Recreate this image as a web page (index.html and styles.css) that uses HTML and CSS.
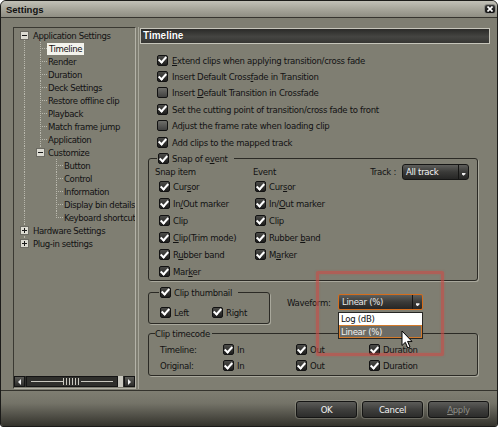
FILE: index.html
```html
<!DOCTYPE html>
<html>
<head>
<meta charset="utf-8">
<title>Settings</title>
<link rel="stylesheet" href="styles.css">
</head>
<body>
<div class="dialog">
  <div class="titlebar">
    <span class="title">Settings</span>
    <span class="close"><svg width="6" height="6" viewBox="0 0 6 6"><path d="M0.5 0.5L5.5 5.5M5.5 0.5L0.5 5.5" stroke="#fff" stroke-width="1.6"/></svg></span>
  </div>
  <div class="main">
    <div class="tree">
      <div class="tree-items">
        <div class="node"><span class="g vb"><span class="box minus"></span></span><span class="lbl top">Application Settings</span></div>
        <div class="node"><span class="g v"></span><span class="g tee"></span><span class="lbl sel">Timeline</span></div>
        <div class="node"><span class="g v"></span><span class="g tee"></span><span class="lbl">Render</span></div>
        <div class="node"><span class="g v"></span><span class="g tee"></span><span class="lbl">Duration</span></div>
        <div class="node"><span class="g v"></span><span class="g tee"></span><span class="lbl">Deck Settings</span></div>
        <div class="node"><span class="g v"></span><span class="g tee"></span><span class="lbl">Restore offline clip</span></div>
        <div class="node"><span class="g v"></span><span class="g tee"></span><span class="lbl">Playback</span></div>
        <div class="node"><span class="g v"></span><span class="g tee"></span><span class="lbl">Match frame jump</span></div>
        <div class="node"><span class="g v"></span><span class="g tee"></span><span class="lbl">Application</span></div>
        <div class="node"><span class="g v"></span><span class="g vt"><span class="box minus"></span></span><span class="lbl">Customize</span></div>
        <div class="node"><span class="g v"></span><span class="g"></span><span class="g tee"></span><span class="lbl">Button</span></div>
        <div class="node"><span class="g v"></span><span class="g"></span><span class="g tee"></span><span class="lbl">Control</span></div>
        <div class="node"><span class="g v"></span><span class="g"></span><span class="g tee"></span><span class="lbl">Information</span></div>
        <div class="node"><span class="g v"></span><span class="g"></span><span class="g tee"></span><span class="lbl">Display bin details</span></div>
        <div class="node"><span class="g v"></span><span class="g"></span><span class="g ell"></span><span class="lbl">Keyboard shortcuts</span></div>
        <div class="node"><span class="g v"><span class="box plus"></span></span><span class="lbl top">Hardware Settings</span></div>
        <div class="node"><span class="g vt"><span class="box plus"></span></span><span class="lbl top">Plug-in settings</span></div>
      </div>
      <div class="hscroll">
        <span class="sb-btn"><span class="tri-l"></span></span>
        <span class="sb-thumb"></span>
        <span class="sb-rest"></span>
        <span class="sb-btn"><span class="tri-r"></span></span>
      </div>
    </div>

    <div class="panel">
      <div class="panel-head">Timeline</div>
      <div class="opts">
        <div class="opt"><span class="cb on"></span><span><u>E</u>xtend clips when applying transition/cross fade</span></div>
        <div class="opt"><span class="cb on"></span><span>Insert Default Cross<u>f</u>ade in Transition</span></div>
        <div class="opt"><span class="cb off"></span><span>Insert <u>D</u>efault Transition in Crossfade</span></div>
        <div class="opt"><span class="cb on"></span><span>Set the cutting point of transition/cross fade to front</span></div>
        <div class="opt"><span class="cb off"></span><span>Adjust the frame rate when loading clip</span></div>
        <div class="opt"><span class="cb on"></span><span>Add clips to the mapped track</span></div>
      </div>

      <fieldset class="group snap">
        <legend class="legend-cb"><span class="cb on"></span><span>Snap of e<u>v</u>ent</span></legend>
        <div class="snap-grid">
          <div class="col col-snap">
            <div class="col-head">Snap item</div>
            <div class="item"><span class="cb on"></span><span>Cur<u>s</u>or</span></div>
            <div class="item"><span class="cb on"></span><span>In<u>/</u>Out marker</span></div>
            <div class="item"><span class="cb on"></span><span>Clip</span></div>
            <div class="item"><span class="cb on"></span><span><u>C</u>lip(Trim mode)</span></div>
            <div class="item"><span class="cb on"></span><span>R<u>u</u>bber band</span></div>
            <div class="item"><span class="cb on"></span><span>Mar<u>k</u>er</span></div>
          </div>
          <div class="col col-event">
            <div class="col-head">Event</div>
            <div class="item"><span class="cb on"></span><span>Cur<u>s</u>or</span></div>
            <div class="item"><span class="cb on"></span><span>In/<u>O</u>ut marker</span></div>
            <div class="item"><span class="cb on"></span><span>Clip</span></div>
            <div class="item"><span class="cb on"></span><span>Rubber <u>b</u>and</span></div>
            <div class="item"><span class="cb on"></span><span>M<u>a</u>rker</span></div>
          </div>
          <div class="track">
            <span>Track :</span>
            <span class="select track-select"><span class="sel-text">All track</span><span class="sel-arrow"></span></span>
          </div>
        </div>
      </fieldset>

      <div class="thumb-row">
        <fieldset class="group thumb">
          <legend class="legend-cb"><span class="cb on"></span><span>Clip thumbnail</span></legend>
          <div class="lr">
            <div class="item item-left"><span class="cb on"></span><span>Left</span></div>
            <div class="item"><span class="cb on"></span><span>Right</span></div>
          </div>
        </fieldset>
        <div class="waveform">
          <span class="wf-label">Waveform:</span>
          <span class="select wave-select"><span class="sel-text">Linear (%)</span><span class="sel-arrow"></span></span>
        </div>
      </div>

      <fieldset class="group timecode">
        <legend class="legend-plain">Clip timecode</legend>
        <div class="tc-row">
          <span>Timeline:</span>
          <span class="item"><span class="cb on"></span><span>In</span></span>
          <span class="item"><span class="cb on"></span><span>Out</span></span>
          <span class="item"><span class="cb on"></span><span>Duration</span></span>
        </div>
        <div class="tc-row">
          <span>Original:</span>
          <span class="item"><span class="cb on"></span><span>In</span></span>
          <span class="item"><span class="cb on"></span><span>Out</span></span>
          <span class="item"><span class="cb on"></span><span>Duration</span></span>
        </div>
      </fieldset>
    </div>
  </div>

  <div class="footer">
    <button class="btn">OK</button>
    <button class="btn">Cancel</button>
    <button class="btn disabled"><u>A</u>pply</button>
  </div>

  <div class="highlight"></div>
  <div class="droplist">
    <div class="dl-item">Log (dB)</div>
    <div class="dl-item active">Linear (%)</div>
  </div>
  <svg class="cursor" width="13" height="20" viewBox="0 0 13 20">
    <path d="M1 1 L1 15.5 L4.3 12.3 L6.8 18 L9 17 L6.6 11.4 L11 11.4 Z" fill="#fff" stroke="#000" stroke-width="1" stroke-linejoin="round"/>
  </svg>
</div>
</body>
</html>
```

FILE: styles.css
```css
html, body {
  margin: 0;
  padding: 0;
  background: #ffffff;
}

body {
  font-family: "DejaVu Sans Condensed", "Liberation Sans", Arial, sans-serif;
  font-size: 9.5px;
  letter-spacing: -0.3px;
  color: #121212;
}

u {
  text-decoration: underline;
  text-underline-offset: 1px;
}

.dialog {
  position: relative;
  width: 498px;
  height: 427px;
  box-sizing: border-box;
  border: 1px solid #1b1b19;
  border-radius: 6px 6px 3px 3px;
  background: #7f7e72;
  overflow: hidden;
}

/* title bar */
.titlebar {
  height: 16px;
  border-bottom: 1px solid #36352f;
  background: linear-gradient(#c2c1b7 0, #a9a89d 45%, #8f8e83 100%);
  display: flex;
  align-items: center;
  justify-content: space-between;
  padding: 0 1px 0 5px;
}

.title {
  font-family: "Liberation Sans", Arial, sans-serif;
  font-weight: bold;
  font-size: 9.5px;
  letter-spacing: 0;
  color: #111;
}

.close {
  width: 12px;
  height: 10px;
  box-sizing: border-box;
  border: 1px solid #8a8a84;
  border-radius: 3px;
  background: linear-gradient(#3a3a38, #101010);
  display: flex;
  align-items: center;
  justify-content: center;
}

/* main area */
.main {
  height: 372px;
  box-sizing: border-box;
  padding: 9px 6px 0 12px;
  display: flex;
  align-items: flex-start;
}

.tree {
  width: 123px;
  height: 362px;
  box-sizing: border-box;
  border: 1px solid;
  border-color: #3a3932 #b3b2a7 #b3b2a7 #3a3932;
  display: flex;
  flex-direction: column;
  flex: none;
}

.tree-items {
  flex: 1;
  padding: 1px 0 0 2px;
  overflow: hidden;
  letter-spacing: -0.4px;
}

.node {
  height: 13px;
  display: flex;
  align-items: center;
  white-space: nowrap;
}

.g {
  width: 16px;
  height: 13px;
  flex: none;
  display: flex;
  align-items: center;
  justify-content: center;
  background-repeat: no-repeat;
}

.v {
  background-image: repeating-linear-gradient(to bottom, #b9b8ad 0 1px, transparent 1px 2px);
  background-size: 1px 13px;
  background-position: 8px 0;
}

.vb {
  background-image: repeating-linear-gradient(to bottom, #b9b8ad 0 1px, transparent 1px 2px);
  background-size: 1px 6px;
  background-position: 8px 7px;
}

.vt {
  background-image: repeating-linear-gradient(to bottom, #b9b8ad 0 1px, transparent 1px 2px);
  background-size: 1px 7px;
  background-position: 8px 0;
}

.tee {
  background-image:
    repeating-linear-gradient(to bottom, #b9b8ad 0 1px, transparent 1px 2px),
    repeating-linear-gradient(to right, #b9b8ad 0 1px, transparent 1px 2px);
  background-size: 1px 13px, 8px 1px;
  background-position: 8px 0, 8px 6px;
}

.ell {
  background-image:
    repeating-linear-gradient(to bottom, #b9b8ad 0 1px, transparent 1px 2px),
    repeating-linear-gradient(to right, #b9b8ad 0 1px, transparent 1px 2px);
  background-size: 1px 7px, 8px 1px;
  background-position: 8px 0, 8px 6px;
}

.box {
  width: 9px;
  height: 9px;
  box-sizing: border-box;
  border: 1px solid #6b6a62;
  background-repeat: no-repeat;
}

.box.minus {
  background-image: linear-gradient(#1a1a1a, #1a1a1a);
  background-size: 5px 1px;
  background-position: center;
  background-color: #dcdbd2;
}

.box.plus {
  background-image: linear-gradient(#1a1a1a, #1a1a1a), linear-gradient(#1a1a1a, #1a1a1a);
  background-size: 5px 1px, 1px 5px;
  background-position: center, center;
  background-color: #dcdbd2;
}

.lbl {
  padding: 0;
  line-height: 12px;
}

.lbl.top {
  padding-left: 1px;
}

.lbl.sel {
  background: #f3f3ec;
  color: #111;
  padding: 0 2px;
  margin-left: -1px;
}

/* tree scrollbar */
.hscroll {
  height: 11px;
  margin: 0 0 1px 0;
  display: flex;
  flex: none;
  background: #2e2e2b;
}

.sb-btn {
  width: 11px;
  flex: none;
  box-sizing: border-box;
  border: 1px solid #141414;
  background: linear-gradient(#5a5a56, #2c2c2a);
  display: flex;
  align-items: center;
  justify-content: center;
}

.tri-l {
  width: 0;
  height: 0;
  border-top: 3px solid transparent;
  border-bottom: 3px solid transparent;
  border-right: 3px solid #f0f0f0;
}

.tri-r {
  width: 0;
  height: 0;
  border-top: 3px solid transparent;
  border-bottom: 3px solid transparent;
  border-left: 3px solid #f0f0f0;
}

.sb-thumb {
  flex: 1;
  margin-left: 1px;
  box-sizing: border-box;
  border: 1px solid #141414;
  background-color: #2f2f2c;
  background-image:
    repeating-linear-gradient(to right, #c9c8bf 0 1px, #2f2f2c 1px 3px),
    linear-gradient(#c9c8bf, #c9c8bf);
  background-size: 18px 7px, calc(100% - 8px) 1px;
  background-position: center, center;
  background-repeat: no-repeat;
}

.sb-rest {
  width: 5px;
  flex: none;
  background: #c9c8bf;
  margin-right: 1px;
}

/* right panel */
.panel {
  flex: 1;
  height: 362px;
  margin-left: 2px;
  box-sizing: border-box;
  border-left: 1px solid #a8a79b;
  padding-right: 1px;
  display: flex;
  flex-direction: column;
}

.panel-head {
  margin-left: 1px;
  margin-top: 1px;
  height: 16px;
  box-sizing: border-box;
  border: 1px solid #c6c5ba;
  background: linear-gradient(#2a2a28 0, #454542 55%, #353532 100%);
  color: #ffffff;
  font-family: "Liberation Sans", Arial, sans-serif;
  font-weight: bold;
  font-size: 10px;
  letter-spacing: 0;
  line-height: 14px;
  padding-left: 2px;
  text-shadow: 0 0 1px #000;
}

.opts {
  padding: 8px 0 0 18px;
}

.opt {
  height: 16.4px;
  display: flex;
  align-items: center;
  gap: 4px;
  white-space: nowrap;
}

.cb {
  width: 11px;
  height: 11px;
  box-sizing: border-box;
  border: 1px solid #121212;
  border-radius: 2px;
  background: linear-gradient(#4c4c49, #1e1e1d);
  display: inline-flex;
  align-items: center;
  justify-content: center;
  flex: none;
}

.cb.on::after {
  content: "";
  width: 3px;
  height: 6px;
  border: solid #ffffff;
  border-width: 0 2px 2px 0;
  transform: rotate(42deg);
  margin-top: -2px;
}

.cb.off {
  background: linear-gradient(#6e6e6a, #414140);
}

/* group boxes */
.group {
  margin: 0;
  border: 1px solid #2b2a25;
  border-radius: 3px;
  box-shadow: 1px 1px 0 #a9a89c;
  min-width: 0;
}

.legend-cb {
  display: flex;
  align-items: center;
  gap: 3px;
  height: 13px;
  padding: 0 6px 0 1px;
  white-space: nowrap;
}

.legend-plain {
  height: 13px;
  line-height: 13px;
  padding: 0 2px 0 0;
}

.snap {
  margin: 2px 0 0 9px;
  width: 330px;
  box-sizing: border-box;
  padding: 0 8px 0 6px;
}

.snap .legend-cb {
  margin-left: 2px;
}

.snap-grid {
  display: flex;
  align-items: flex-start;
}

.col {
  display: flex;
  flex-direction: column;
}

.col-snap {
  width: 98px;
}

.col-event {
  flex: 1;
}

.col-head {
  height: 13px;
  line-height: 13px;
}

.item {
  height: 17px;
  display: flex;
  align-items: center;
  gap: 3px;
  white-space: nowrap;
}

.col-snap .item {
  padding-left: 4px;
}

.col-event .item {
  padding-left: 2px;
}

.track {
  height: 13px;
  display: flex;
  align-items: center;
  gap: 6px;
}

.select {
  height: 16px;
  box-sizing: border-box;
  border: 1px solid #161615;
  border-radius: 3px;
  background: linear-gradient(#5e5e5b 0, #3a3a38 50%, #262625 100%);
  color: #f4f4f4;
  display: flex;
  align-items: stretch;
  flex: none;
}

.track-select {
  width: 67px;
}

.sel-text {
  flex: 1;
  padding-left: 3px;
  line-height: 14px;
  white-space: nowrap;
}

.sel-arrow {
  width: 10px;
  border-left: 1px solid #151514;
  display: flex;
  align-items: flex-end;
  justify-content: center;
  padding-bottom: 3px;
  box-sizing: border-box;
}

.sel-arrow::after {
  content: "";
  width: 4px;
  height: 3px;
  background: #f2f2f2;
  clip-path: polygon(0 0, 100% 0, 100% 40%, 50% 100%, 0 40%);
}

/* thumbnail row */
.thumb-row {
  display: flex;
  align-items: flex-start;
  margin-top: 4.5px;
}

.thumb {
  margin: 0 0 0 9px;
  width: 122px;
  box-sizing: border-box;
  padding: 0 4px 2px 11px;
}

.thumb .legend-cb {
  margin-left: -1px;
}

.lr {
  display: flex;
  padding-top: 5px;
}

.item-left {
  width: 52px;
}

.waveform {
  margin: 8.5px 0 0 17px;
  display: flex;
  align-items: center;
  white-space: nowrap;
}

.wf-label {
  width: 51px;
}

.wave-select {
  width: 85px;
  border-color: #d56d1c;
  border-radius: 2px;
}

.wave-select .sel-text {
  color: #e9e9e9;
}

/* timecode */
.timecode {
  margin: 3.5px 0 0 9px;
  width: 330px;
  box-sizing: border-box;
  padding: 1.5px 0 1px 6px;
}

.tc-row {
  height: 16px;
  display: grid;
  grid-template-columns: 63px 73px 73px auto;
  align-items: center;
  padding-left: 5px;
}

.tc-row .item {
  height: 16px;
}

/* footer */
.footer {
  height: 36px;
  box-sizing: border-box;
  border-top: 1px solid #34332d;
  background: linear-gradient(#7f7e72 0, #747368 35%, #4c4b43 75%, #34332c 100%);
  display: flex;
  justify-content: flex-end;
  align-items: flex-start;
  gap: 5px;
  padding: 10px 8px 0 0;
}

.btn {
  width: 61px;
  height: 17px;
  box-sizing: border-box;
  margin: 0;
  padding: 0;
  border: 1px solid #151514;
  border-radius: 3px;
  background: linear-gradient(#5c5c59 0, #3f3f3d 50%, #2c2c2b 100%);
  box-shadow: 0 0 0 1px rgba(170, 169, 158, 0.35);
  color: #f2f2f2;
  font-family: "DejaVu Sans Condensed", "Liberation Sans", Arial, sans-serif;
  font-size: 9.5px;
  letter-spacing: -0.3px;
  line-height: 15px;
}

.btn.disabled {
  color: #8e8e88;
}

/* overlays */
.highlight {
  position: absolute;
  left: 315px;
  top: 270px;
  width: 128px;
  height: 85px;
  box-sizing: border-box;
  border: 3px solid rgba(205, 75, 70, 0.6);
  border-radius: 2px;
  box-shadow: 0 0 2px rgba(205, 75, 70, 0.5), inset 0 0 2px rgba(205, 75, 70, 0.5);
}

.droplist {
  position: absolute;
  left: 337px;
  top: 311px;
  width: 85px;
  box-sizing: border-box;
  border: 1px solid #262624;
  background: #ffffff;
}

.dl-item {
  height: 12px;
  line-height: 12px;
  padding-left: 2px;
  color: #111;
  white-space: nowrap;
}

.dl-item.active {
  height: 13px;
  line-height: 11px;
  box-sizing: border-box;
  border: 1px solid #d37a2b;
  background: #6d6c66;
  color: #f2f2f2;
  padding-left: 1px;
}

.cursor {
  position: absolute;
  left: 400px;
  top: 329px;
}
```
